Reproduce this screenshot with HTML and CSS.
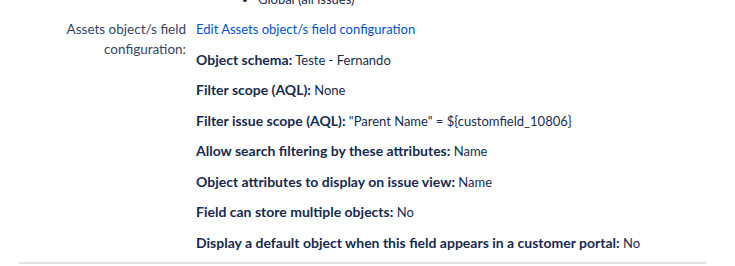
FILE: index.html
```html
<!DOCTYPE html>
<html lang="en">
<head>
  <meta charset="UTF-8" />
  <title>Assets object/s field configuration</title>
  <link rel="stylesheet" href="styles.css">
</head>
<body>

  <div class="config-section">
    <div class="field-group field-group--contexts">
      <div class="field-label"></div>
      <div class="field-value">
        <ul class="context-list">
          <li>Global (all issues)</li>
        </ul>
      </div>
    </div>

    <div class="field-group">
      <div class="field-label">Assets object/s field configuration:</div>
      <div class="field-value">
        <a class="edit-link" href="#">Edit Assets object/s field configuration</a>
        <p><strong>Object schema:</strong> Teste - Fernando</p>
        <p><strong>Filter scope (AQL):</strong> None</p>
        <p><strong>Filter issue scope (AQL):</strong> "Parent Name" = ${customfield_10806}</p>
        <p><strong>Allow search filtering by these attributes:</strong> Name</p>
        <p><strong>Object attributes to display on issue view:</strong> Name</p>
        <p><strong>Field can store multiple objects:</strong> No</p>
        <p><strong>Display a default object when this field appears in a customer portal:</strong> No</p>
      </div>
    </div>
  </div>

</body>
</html>
```

FILE: styles.css
```css
body {
  margin: 0;
  font-family: Lato, "Open Sans", sans-serif;
  font-size: 13px;
  line-height: 20px;
  color: #172b4d;
  background: #fff;
}

/* Bloc de configuration avec la ligne du bas */
.config-section {
  margin: 0 29px 0 19px;
  padding-bottom: 9px;
  border-bottom: 2px solid #dfe1e6;
}

.field-group {
  display: grid;
  grid-template-columns: 167px 1fr;
  column-gap: 10px;
}

.field-group--contexts {
  margin-top: -11px;
  margin-bottom: 10px;
}

.field-label {
  text-align: right;
  color: #344563;
  font-size: 13.5px;
}

.context-list {
  margin: 0;
  padding-left: 62px;
}

.edit-link {
  display: block;
  color: #0052cc;
  text-decoration: none;
}

.field-value p {
  margin: 10.5px 0 0;
}

.field-value strong {
  font-size: 14px;
  font-weight: 700;
}
```
